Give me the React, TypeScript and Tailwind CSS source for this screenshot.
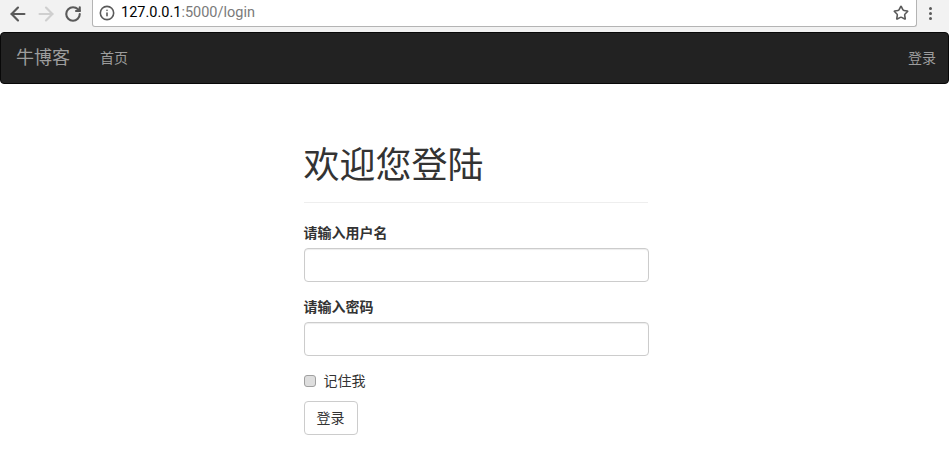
import { ArrowLeft, ArrowRight, RotateCw, Info, Star } from "lucide-react";

const CJK = "font-['Liberation_Sans','Noto_Sans_CJK_SC',sans-serif]";

function BrowserBar() {
  return (
    <div className="flex h-8 items-start bg-[#f2f2f2]">
      <div className="flex h-[27px] w-[92px] items-center">
        <ArrowLeft className="ml-[7px] h-[22px] w-[22px] text-[#5a5a5a]" strokeWidth={2.4} />
        <ArrowRight className="ml-[6px] h-[22px] w-[22px] text-[#cfcfcf]" strokeWidth={2.4} />
        <RotateCw className="ml-[7px] h-[18px] w-[18px] text-[#5a5a5a]" strokeWidth={2.8} />
      </div>
      <div className="flex h-[27px] w-[825px] items-center rounded-b-[3px] border-b border-l border-r border-[#b4b4b4] bg-white">
        <Info className="ml-[6px] h-[16px] w-[16px] text-[#5a5a5a]" strokeWidth={2.4} />
        <span className="ml-[6px] font-['Roboto',sans-serif] text-[14.5px] text-black">
          127.0.0.1<span className="text-[#7a7a7a]">:5000/login</span>
        </span>
        <Star className="ml-auto mr-[7px] h-[16px] w-[16px] text-[#5a5a5a]" strokeWidth={2.4} />
      </div>
      <div className="ml-[12px] flex h-[27px] flex-col items-center justify-center gap-[2px]">
        <div className="h-[3px] w-[3px] rounded-full bg-[#5a5a5a]" />
        <div className="h-[3px] w-[3px] rounded-full bg-[#5a5a5a]" />
        <div className="h-[3px] w-[3px] rounded-full bg-[#5a5a5a]" />
      </div>
    </div>
  );
}

function Navbar() {
  return (
    <nav className="flex h-[52px] items-center rounded border border-[#080808] bg-[#222222] pl-[15px] pr-[12px] text-[#9d9d9d]">
      <a className="text-[18px]">牛博客</a>
      <a className="ml-[30px] text-[14px]">首页</a>
      <a className="ml-auto text-[14px]">登录</a>
    </nav>
  );
}

function LoginForm() {
  return (
    <div className="ml-[304px] w-[345px] text-[#333333]">
      <h1 className="mr-px border-b border-[#eeeeee] pb-[9px] pt-[54px] indent-[-0.5px] text-[36px] font-normal leading-[55px]">
        欢迎您登陆
      </h1>
      <label className="mt-[20px] block indent-[-0.5px] text-[14px] font-bold leading-[20px]">请输入用户名</label>
      <input
        type="text"
        className="mt-[5px] block h-[34px] w-full rounded border border-[#cccccc] bg-white shadow-[inset_0_1px_1px_rgba(0,0,0,0.075)]"
      />
      <label className="mt-[15px] block indent-[-0.5px] text-[14px] font-bold leading-[20px]">请输入密码</label>
      <input
        type="password"
        className="mt-[5px] block h-[34px] w-full rounded border border-[#cccccc] bg-white shadow-[inset_0_1px_1px_rgba(0,0,0,0.075)]"
      />
      <div className="mt-[15px] flex h-[20px] items-center text-[14px]">
        <div className="h-[12px] w-[12px] rounded-[3px] border border-[#a0a0a0] bg-[#dedede]" />
        <span className="ml-[7.5px]">记住我</span>
      </div>
      <button
        type="button"
        className="mt-[10px] block h-[34px] w-[54px] rounded border border-[#cccccc] bg-white pr-px text-[14px] text-[#333333]"
      >
        登录
      </button>
    </div>
  );
}

export default function App() {
  return (
    <div className={`h-[466px] w-[949px] overflow-hidden bg-white ${CJK}`}>
      <BrowserBar />
      <Navbar />
      <LoginForm />
    </div>
  );
}
